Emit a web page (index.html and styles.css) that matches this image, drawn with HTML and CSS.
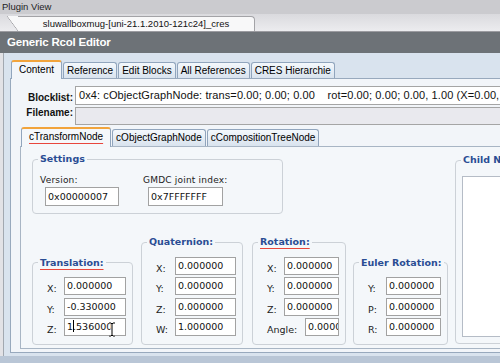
FILE: index.html
```html
<!doctype html>
<html>
<head>
<meta charset="utf-8">
<title>Generic Rcol Editor</title>
<link rel="stylesheet" href="styles.css">
</head>
<body>

<div class="topbar">Plugin View</div>
<div class="docbar">
  <div class="doctab">sluwallboxmug-[uni-21.1.2010-121c24]_cres</div>
</div>
<div class="header">Generic Rcol Editor</div>

<div class="main">
  <div class="tabs">
    <div class="tab on">Content</div>
    <div class="tab">Reference</div>
    <div class="tab">Edit Blocks</div>
    <div class="tab">All References</div>
    <div class="tab">CRES Hierarchie</div>
  </div>

  <div class="panel">
    <div class="frow">
      <label class="low">Blocklist:</label>
      <div class="box">0x4: cObjectGraphNode: trans=0.00; 0.00; 0.00    rot=0.00; 0.00; 0.00, 1.00 (X=0.00, Y=0.00, Z=0.00)</div>
    </div>
    <div class="frow">
      <label>Filename:</label>
      <div class="box empty"></div>
    </div>

    <div class="tabs sub">
      <div class="tab on"><span class="spell">cTransformNode</span></div>
      <div class="tab">cObjectGraphNode</div>
      <div class="tab">cCompositionTreeNode</div>
    </div>

    <div class="subpanel">
      <div class="leftcol">
        <fieldset class="settings">
          <legend>Settings</legend>
          <div class="sbody">
            <div class="scol">
              <label>Version:</label>
              <div class="inp">0x00000007</div>
            </div>
            <div class="scol">
              <label>GMDC joint index:</label>
              <div class="inp">0x7FFFFFFF</div>
            </div>
          </div>
        </fieldset>

        <div class="groups">
          <fieldset class="grp trans">
            <legend><span class="spell">Translation:</span></legend>
            <div class="gbody">
              <div class="grow"><label>X:</label><div class="inp">0.000000</div></div>
              <div class="grow"><label>Y:</label><div class="inp">-0.330000</div></div>
              <div class="grow cursor-row"><label>Z:</label><div class="inp">1<span class="caret"></span>.536000</div>
                <svg class="ibeam" width="8" height="15" viewBox="0 0 8 15">
                  <path d="M1 1h2l1 1 1-1h2M4 2v11M1 14h2l1-1 1 1h2" fill="none" stroke="#fff" stroke-width="3"/>
                  <path d="M1 1h2l1 1 1-1h2M4 2v11M1 14h2l1-1 1 1h2" fill="none" stroke="#000" stroke-width="1"/>
                </svg>
              </div>
            </div>
          </fieldset>

          <fieldset class="grp quat">
            <legend>Quaternion:</legend>
            <div class="gbody">
              <div class="grow"><label>X:</label><div class="inp">0.000000</div></div>
              <div class="grow"><label>Y:</label><div class="inp">0.000000</div></div>
              <div class="grow"><label>Z:</label><div class="inp">0.000000</div></div>
              <div class="grow"><label>W:</label><div class="inp">1.000000</div></div>
            </div>
          </fieldset>

          <fieldset class="grp rot">
            <legend><span class="spell">Rotation:</span></legend>
            <div class="gbody">
              <div class="grow"><label>X:</label><div class="inp">0.000000</div></div>
              <div class="grow"><label>Y:</label><div class="inp">0.000000</div></div>
              <div class="grow"><label>Z:</label><div class="inp">0.000000</div></div>
              <div class="grow"><label>Angle:</label><div class="inp angle">0.000000</div></div>
            </div>
          </fieldset>

          <fieldset class="grp euler">
            <legend>Euler Rotation:</legend>
            <div class="gbody">
              <div class="grow"><label>Y:</label><div class="inp">0.000000</div></div>
              <div class="grow"><label>P:</label><div class="inp">0.000000</div></div>
              <div class="grow"><label>R:</label><div class="inp">0.000000</div></div>
            </div>
          </fieldset>
        </div>
      </div>

      <fieldset class="child">
        <legend>Child Nodes</legend>
        <div class="cbody">
          <div class="list"></div>
        </div>
      </fieldset>
    </div>
  </div>

  <div class="band"></div>
</div>

</body>
</html>
```

FILE: styles.css
```css
html, body { margin:0; padding:0; }

body {
  width:500px;
  height:363px;
  overflow:hidden;
  font-family:"Liberation Sans", Arial, sans-serif;
  font-size:10px;
  color:#000;
  background:#d9e3ee;
}

.topbar {
  height:14px;
  padding-left:2px;
  background:#cbcbcf;
  font-size:9.5px;
  line-height:14px;
  color:#1e1e1e;
}

.docbar {
  height:18px;
  box-sizing:border-box;
  padding-top:2px;
  background:linear-gradient(#dadade, #ececef);
  border-bottom:1px solid #9b9ba0;
}

.doctab {
  position:relative;
  margin-left:18px;
  width:237px;
  height:15px;
  box-sizing:border-box;
  border-top:1px solid #a3a3a7;
  border-right:1px solid #a3a3a7;
  border-radius:0 4px 0 0;
  background:#f8f8f9;
  font-size:9.5px;
  line-height:14px;
  text-align:center;
  color:#111;
}

.doctab::before {
  content:"";
  position:absolute;
  left:-11px;
  top:-1px;
  width:11px;
  height:15px;
  background:linear-gradient(to top right, transparent calc(50% - 0.6px), #a3a3a7 50%, #f8f8f9 calc(50% + 0.6px));
}

.header {
  height:21px;
  padding-left:7px;
  background:#6d7277;
  color:#fff;
  font-weight:bold;
  font-size:11.5px;
  line-height:21px;
  letter-spacing:-0.2px;
}

.main {
  height:310px;
  padding-left:10px;
  background:linear-gradient(to right, #e2e2e6 0 3px, #a2a8b0 3px 4px, transparent 4px), #d9e3ee;
  overflow:hidden;
}

/* tab strips */
.tabs {
  position:relative;
  z-index:1;
  display:flex;
  align-items:flex-end;
  height:18px;
  margin-top:7px;
  padding-left:1px;
}

.tab {
  height:16px;
  box-sizing:border-box;
  margin-right:1px;
  padding:0 3px;
  border:1px solid #91a5bd;
  border-bottom:0;
  border-radius:3px 3px 0 0;
  background:linear-gradient(#f4f8fc, #d9e3ee);
  line-height:15px;
  white-space:nowrap;
}

.tab.on {
  height:19px;
  margin-bottom:-1px;
  padding:0 7px;
  border-top:2px solid #f2a43c;
  background:#f2f5f9;
  line-height:16px;
}

.tabs.sub {
  height:19px;
  margin-top:2px;
}

.tabs.sub .tab { height:17px; }
.tabs.sub .tab.on { height:20px; background:#f4f7fa; }

.spell {
  text-decoration:underline;
  text-decoration-color:#e8463c;
  text-underline-offset:3px;
}

/* content panel */
.panel {
  width:540px;
  height:275px;
  box-sizing:border-box;
  padding:7px 0 0 9px;
  border:1px solid #98a9bd;
  border-right:0;
  background:#f2f5f9;
}

.frow { display:flex; }
.frow + .frow { margin-top:2px; }

.frow label {
  width:53px;
  margin-right:2px;
  text-align:right;
  font-weight:bold;
  line-height:12px;
  color:#111;
}

.frow label.low { align-self:flex-end; padding-bottom:1px; }

.box {
  flex:1;
  height:19px;
  box-sizing:border-box;
  padding-left:3px;
  border:1px solid #a5a5a5;
  background:#fff;
  font-size:11px;
  letter-spacing:0.1px;
  line-height:17px;
  white-space:pre;
  overflow:hidden;
  color:#111;
}

.box.empty { height:18px; background:#e9e9ee; }

.subpanel {
  display:flex;
  align-items:flex-start;
  height:203px;
  box-sizing:border-box;
  padding:6px 0 0 11px;
  border:1px solid #a8b5c4;
  border-right:0;
  background:#f4f7fa;
}

/* fieldsets */
fieldset {
  margin:0;
  padding:0;
  min-width:0;
  border:1px solid #ccd1d7;
  border-radius:4px;
  box-sizing:border-box;
}

legend {
  margin-left:5px;
  padding:0 2px;
  font:bold 9.5px "DejaVu Sans", sans-serif;
  line-height:12px;
  color:#2a4d94;
}

.leftcol {
  display:flex;
  flex-direction:column;
  align-items:flex-start;
  width:416px;
  flex:none;
}

.settings { width:251px; }

.sbody {
  display:flex;
  padding:10px 7px 7px;
}

.scol { width:103px; }

.scol label {
  display:block;
  font:9px "DejaVu Sans", sans-serif;
  letter-spacing:0.2px;
  line-height:11px;
  color:#222;
}

.inp {
  height:18px;
  box-sizing:border-box;
  padding-left:2px;
  border:1px solid #a2a2a2;
  background:#fff;
  font:9.5px "DejaVu Sans", sans-serif;
  line-height:16px;
  white-space:nowrap;
  overflow:hidden;
  color:#111;
}

.scol .inp { width:74px; height:19px; margin:1px 0 0 5px; line-height:17px; }
.scol + .scol .inp { width:75px; }

.groups {
  display:flex;
  align-items:flex-end;
  margin-top:22px;
}

.trans { width:101px; }
.quat { width:102px; margin-left:8px; }
.rot { width:94px; margin-left:9px; }
.euler { width:95px; margin-left:7px; }

.gbody {
  display:flex;
  flex-direction:column;
  gap:2.5px;
  padding:8.5px 6px 8px 14px;
}

.grow {
  position:relative;
  display:flex;
  justify-content:space-between;
}

.grow label {
  padding-top:6px;
  font:9.5px "DejaVu Sans", sans-serif;
  line-height:12px;
  color:#222;
}

.trans .inp { width:62px; }
.quat .inp { width:61px; }
.rot .inp, .euler .inp { width:55px; }
.rot .inp.angle { width:34px; }

.caret {
  display:inline-block;
  width:1px;
  height:12px;
  margin-right:-1px;
  background:#000;
  vertical-align:-2px;
}

.ibeam {
  position:absolute;
  left:61px;
  top:4px;
}

.child {
  width:80px;
  height:190px;
  margin:1px 0 0 7px;
  flex:none;
}

.cbody { padding:10px 0 6px 6px; }

.list {
  height:161px;
  box-sizing:border-box;
  border:1px solid #b5bcc6;
  border-right:0;
  background:#fff;
}

.band {
  height:7px;
  margin:3px 0 0 -10px;
  background:#b9c6d6;
}
```
